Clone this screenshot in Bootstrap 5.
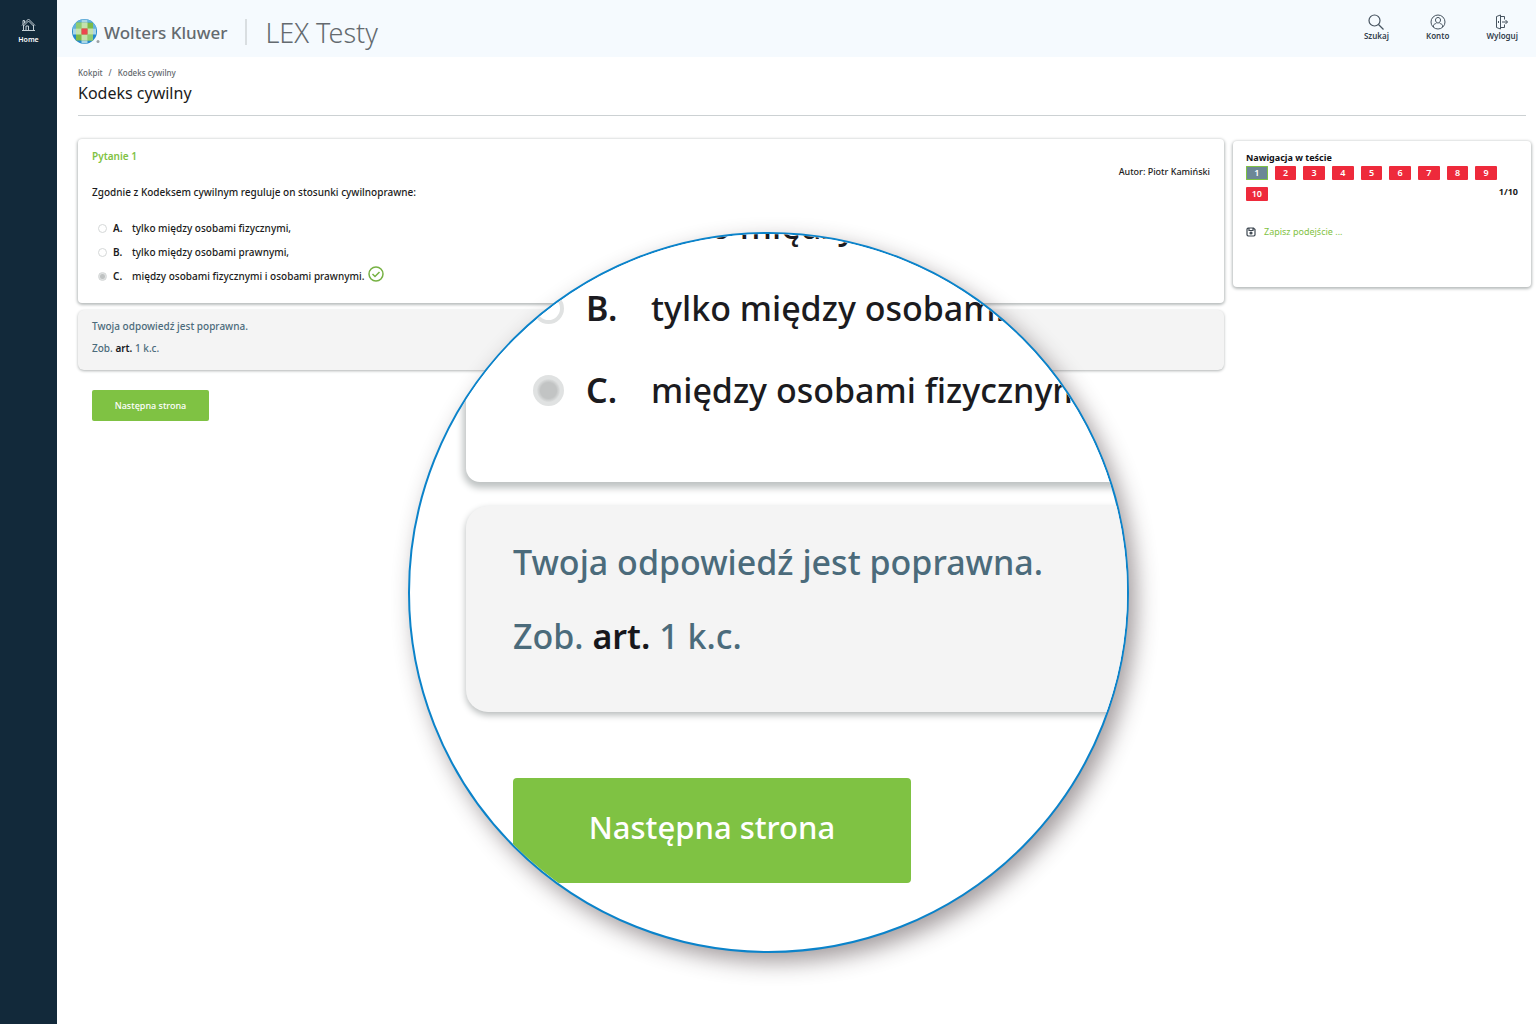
<!DOCTYPE html>
<html lang="pl">
<head>
<meta charset="utf-8">
<meta name="viewport" content="width=device-width, initial-scale=1">
<title>LEX Testy – Kodeks cywilny</title>
<link href="https://cdn.jsdelivr.net/npm/bootstrap@5.3.0/dist/css/bootstrap.min.css" rel="stylesheet">
<style>
:root { --green: #7fc243; --ink: #1b1b20; --slate: #4b6b7b; }
body { font-family: "Noto Sans", "Open Sans", sans-serif; font-size: 10px; line-height: 16px; font-weight: 500; color: var(--ink); background: #fff; }
a { text-decoration: none; color: inherit; }
.side-bar { width: 57px; background: #12293a; color: #fff; }
.side-bar a { font-size: 7px; line-height: 10px; font-weight: 600; margin-top: 18px; }
.top-bar { height: 57px; background: #f5fafe; padding: 6px 18px 0 15px; color: #646a6f; }
.brand-name { font-size: 17px; line-height: 24px; font-weight: 500; padding-top: 2px; }
.brand-rule { width: 2px; height: 26px; background: #d9dee1; margin: 0 18px; }
.product-name { font-size: 27px; line-height: 32px; font-weight: 300; padding-top: 2px; }
.tool-links { gap: 37px; margin-bottom: 9px; }
.tool-link { font-size: 8px; line-height: 11px; color: #33404c; font-weight: 600; }
.content-area { padding: 8px 5px 0 21px; }
.crumbs { font-size: 8px; line-height: 16px; color: #63686c; }
.crumbs span { margin: 0 6px; }
.page-title { font-size: 16px; line-height: 24px; font-weight: 400; margin: 0; }
.title-rule { height: 1px; background: #ccd1d3; margin: 10px 5px 23px 0; }
.page-columns { gap: 9px; }
.panel { border-radius: 4px; box-shadow: 0 1px 3px 1px #b9bdbd; background: #fff; }
.question { height: 164px; padding: 9px 14px; }
.q-label { color: var(--green); font-weight: 600; }
.q-author { font-size: 9px; }
.q-text { margin-top: 4px; }
.choices { margin: 16px 0 0 6px; }
.choice { height: 24px; }
.choice input, .lens-choice input { appearance: none; margin: 0; border: 1px solid #d5d8d8; border-radius: 50%; background: #fff; flex: none; }
.choice input { width: 9px; height: 9px; }
.choice input:checked { background: radial-gradient(circle, #bfc2c2 0 2px, #e0e2e2 3px); }
.choice .letter { width: 19px; margin-left: 6px; font-weight: 600; }
.feedback { background: #f4f4f4; height: 60px; margin-top: 7px; padding: 8px 14px; color: var(--slate); border-radius: 6px; box-shadow: 0 1px 3px 0 #b0b4b4; }
.feedback p { margin: 0 0 6px; }
.feedback a, .lens-feedback a { color: #17171c; font-weight: 600; }
.btn-next { background: var(--green); color: #fff; border: 0; border-radius: 2px; height: 31px; width: 117px; font-size: 9px; font-weight: 500; margin: 20px 0 0 14px; padding: 0; }
.btn-next:hover { background: #70b036; color: #fff; }
.nav-panel { width: 298px; height: 146px; margin-top: 2px; padding: 9px 13px; flex: none; font-size: 9px; }
.nav-title { font-size: 9px; line-height: 16px; font-weight: 700; margin: 0; color: #101014; }
.q-grid { display: grid; grid-template-columns: repeat(9, 1fr); gap: 7px; margin-right: 21px; }
.q-grid a { background: #ee2a3b; color: #fff; height: 14px; line-height: 14px; text-align: center; font-weight: 600; border-radius: 1px; }
.q-grid a.current { background: #6c8796; box-shadow: inset 0 0 0 1px var(--green); }
.progress-note { font-weight: 700; line-height: 14px; margin-top: -16px; text-align: right; }
.save-link { margin-top: 25px; color: var(--green); font-weight: 400; }
/* magnifier laid over the page */
.lens { position: absolute; left: 408px; top: 232px; width: 721px; height: 721px; border-radius: 50%; border: 2px solid #0b83ca; background: #fff; overflow: hidden; box-shadow: 7px 9px 22px 0 rgba(50, 35, 40, .45); }
.lens-body { width: 1000px; margin: -49px 0 0 56px; font-size: 34px; line-height: 50px; }
.lens-card { height: 297px; padding-left: 67px; border-radius: 14px; box-shadow: 0 3px 7px 3px #bfc3c3; background: #fff; }
.lens-choice { height: 82px; }
.lens-choice input { width: 31px; height: 31px; border: 4px solid #e0e2e2; }
.lens-choice input:checked { background: radial-gradient(circle, #c2c4c4 0 8px, #e0e2e2 12px); }
.lens-choice .letter { width: 65px; margin-left: 22px; font-weight: 600; }
.lens-feedback { height: 206px; margin-top: 24px; padding: 31px 47px; border-radius: 22px; background: #f4f4f4; color: var(--slate); box-shadow: 0 3px 7px 0 #b5b9b9; }
.lens-feedback p { margin: 0 0 24px; }
.lens-next { width: 398px; height: 105px; margin: 66px 0 0 47px; padding-bottom: 6px; font-size: 31px; border-radius: 4px; }
</style>
<script src="https://cdn.jsdelivr.net/npm/bootstrap@5.3.0/dist/js/bootstrap.bundle.min.js"></script>
</head>
<body>
<div class="d-flex min-vh-100">
  <nav class="side-bar flex-shrink-0" aria-label="Menu">
    <a href="#" class="d-flex flex-column align-items-center gap-1">
      <svg width="15" height="13" viewBox="0 0 15 13" fill="none" stroke="#c3ced5" stroke-width="1"><path d="M1 7.500 7.500 1 14 7.500M3.500 5V2.500h-1.500v4M2.500 7v5.500h10V7M5 12V8h2.500v4M2.500 8 7.500 3l5 5M1 12.500h13"/></svg>
      <span>Home</span>
    </a>
  </nav>
  <div class="flex-grow-1">
    <header class="top-bar d-flex align-items-center justify-content-between">
      <a href="#" class="d-flex align-items-center">
        <svg width="28" height="28" viewBox="0 0 28 28"><defs><clipPath id="globe"><circle cx="12.500" cy="13.500" r="12.500"/></clipPath></defs>
          <g clip-path="url(#globe)"><path fill="#2388cd" d="M0 0h26v27H0z"/><path fill="#7cba49" d="M4 4.500h17v18H4z"/><path fill="#62b2dc" d="M4 0h5.500v4.500H4zM15.500 0H21v4.500h-5.500zM0 5h4v5.500H0zM21 5h4v5.500h-4z"/><path fill="#a9d6e6" d="M9.500 1.500h6v3h-6zM1 10.500h3v6H1zM21 10.500h3v6h-3zM9.500 22.500h6v3h-6z"/><path fill="#8fcb74" d="M4 4.500h5.500v6H4zM15.500 16.500H21v6h-5.500z"/><path fill="#c3e2ad" d="M9.500 4.500h6v6h-6zM4 10.500h5.500v6H4zM15.500 10.500H21v6h-5.500zM9.500 16.500h6v6h-6z"/><path fill="#ec4650" d="M9.500 10.500h6v6h-6z"/></g>
          <circle cx="26" cy="23.500" r="1.500" fill="#9ba1a5"/></svg>
        <span class="brand-name ms-1">Wolters Kluwer</span>
        <span class="brand-rule"></span>
        <span class="product-name">LEX Testy</span>
      </a>
      <div class="d-flex tool-links">
        <a href="#" class="tool-link d-flex flex-column align-items-center"><svg width="16" height="16" viewBox="0 0 16 16" fill="none" stroke="#46535f" stroke-width="1.200"><circle cx="6.500" cy="6.500" r="5.500"/><path d="m10.500 10.500 5 5"/></svg>Szukaj</a>
        <a href="#" class="tool-link d-flex flex-column align-items-center"><svg width="16" height="16" viewBox="0 0 16 16" fill="none" stroke="#46535f"><circle cx="8" cy="8" r="7"/><path d="M8 3.500c-1.500 0-2.500 1-2.500 2.500S6.500 9 8 9s2.500-1.500 2.500-3S9.500 3.500 8 3.500zM3.500 13v-1.500c0-1.500 2-1.500 3-2.500M9.500 9c1 1 3 1 3 2.500V13"/></svg>Konto</a>
        <a href="#" class="tool-link d-flex flex-column align-items-center"><svg width="16" height="16" viewBox="0 0 16 16" fill="none" stroke="#46535f"><path d="M2.500 2.500 6.500 1v14l-4-1.500zM6.500 2.500h4v3M6.500 13.500h4v-3M8 8h5.500M11.500 6l2 2-2 2M4.500 7v2"/></svg>Wyloguj</a>
      </div>
    </header>
    <main class="content-area">
      <nav class="crumbs" aria-label="Okruszki"><a href="#">Kokpit</a><span>/</span><a href="#">Kodeks cywilny</a></nav>
      <h1 class="page-title">Kodeks cywilny</h1>
      <div class="title-rule"></div>
      <div class="page-columns d-flex align-items-start">
        <div class="flex-grow-1">
          <section class="panel question">
            <div class="q-label">Pytanie 1</div>
            <div class="q-author text-end">Autor: Piotr Kamiński</div>
            <div class="q-text">Zgodnie z Kodeksem cywilnym reguluje on stosunki cywilnoprawne:</div>
            <div class="choices">
              <div class="choice d-flex align-items-center"><input type="radio" name="q" id="qa"><label for="qa" class="d-flex"><span class="letter">A.</span>tylko między osobami fizycznymi,</label></div>
              <div class="choice d-flex align-items-center"><input type="radio" name="q" id="qb"><label for="qb" class="d-flex"><span class="letter">B.</span>tylko między osobami prawnymi,</label></div>
              <div class="choice d-flex align-items-center"><input type="radio" name="q" id="qc" checked><label for="qc" class="d-flex"><span class="letter">C.</span>między osobami fizycznymi i osobami prawnymi.</label>
                <svg class="ms-1 mb-1" width="16" height="16" viewBox="0 0 16 16" fill="none" stroke="#76b143" stroke-width="1.500"><circle cx="8" cy="8" r="7"/><path d="m4.500 8 2.500 2.500 4.500-4.500"/></svg></div>
            </div>
          </section>
          <section class="feedback">
            <p>Twoja odpowiedź jest poprawna.</p>
            <p>Zob. <a href="#">art.</a> 1 k.c.</p>
          </section>
          <button type="button" class="btn btn-next">Następna strona</button>
        </div>
        <aside class="panel nav-panel">
          <h2 class="nav-title">Nawigacja w teście</h2>
          <div class="q-grid">
            <a href="#" class="current">1</a><a href="#">2</a><a href="#">3</a><a href="#">4</a><a href="#">5</a><a href="#">6</a><a href="#">7</a><a href="#">8</a><a href="#">9</a><a href="#">10</a>
          </div>
          <div class="progress-note">1/10</div>
          <a href="#" class="save-link d-flex align-items-center gap-2"><svg width="10" height="10" viewBox="0 0 10 10" fill="none" stroke="#3c4650" stroke-width="1.200"><path d="M2 1h5.500L9 2.500V8L8 9H2L1 8V2zM3 1v2.500h4V1"/><circle cx="5" cy="6" r="1" fill="#3c4650"/></svg>Zapisz podejście ...</a>
        </aside>
      </div>
    </main>
  </div>
</div>
<div class="lens" aria-hidden="true">
  <div class="lens-body">
    <div class="lens-card">
      <div class="lens-choice d-flex align-items-center"><input type="radio" name="z" id="za" tabindex="-1"><label for="za" class="d-flex"><span class="letter">A.</span>tylko między osobami fizycznymi,</label></div>
      <div class="lens-choice d-flex align-items-center"><input type="radio" name="z" id="zb" tabindex="-1"><label for="zb" class="d-flex"><span class="letter">B.</span>tylko między osobami prawnymi,</label></div>
      <div class="lens-choice d-flex align-items-center"><input type="radio" name="z" id="zc" tabindex="-1" checked><label for="zc" class="d-flex"><span class="letter">C.</span>między osobami fizycznymi i osobami prawnymi.</label></div>
    </div>
    <div class="lens-feedback">
      <p>Twoja odpowiedź jest poprawna.</p>
      <p>Zob. <a href="#" tabindex="-1">art.</a> 1 k.c.</p>
    </div>
    <button type="button" class="btn btn-next lens-next" tabindex="-1">Następna strona</button>
  </div>
</div>
</body>
</html>
